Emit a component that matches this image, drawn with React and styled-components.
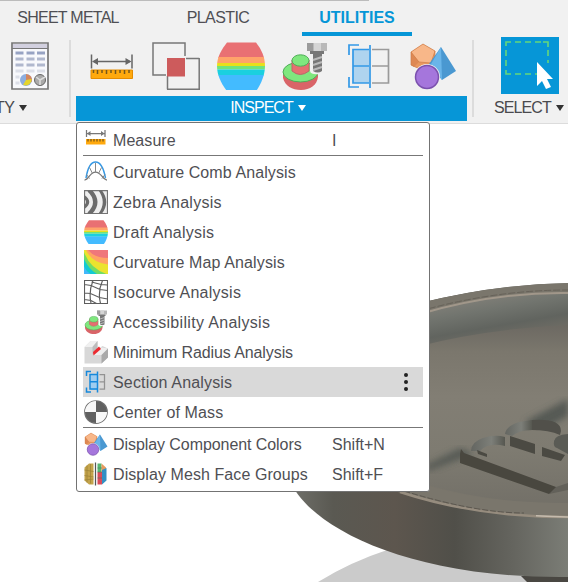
import React from "react";
import styled, { createGlobalStyle, css } from "styled-components";

const GlobalStyle = createGlobalStyle`
  * { box-sizing: border-box; }
  body { margin: 0; background: #fff; overflow: hidden; }
`;

const Page = styled.main`
  position: relative;
  display: flex;
  flex-direction: column;
  width: 568px;
  height: 582px;
  overflow: hidden;
  background: #fff;
  color: #4f4f54;
  font: 16px/1 "Liberation Sans", Arial, sans-serif;
`;

const Ribbon = styled.header`
  display: flex;
  flex-direction: column;
  flex: none;
  height: 124px;
  background: #f1f1f1;
  border-bottom: 1px solid #dcdcdc;
`;

const TopEdge = styled.div`
  width: 369px;
  height: 1px;
  background: #bcbcbc;
`;

const Tabs = styled.nav`
  display: flex;
  height: 35px;
  padding-left: 17px;
`;

const Tab = styled.div`
  display: flex;
  flex: none;
  justify-content: center;
  width: ${(p) => p.$width}px;
  margin-right: ${(p) => p.$gap || 0}px;
  padding-top: 9px;
  white-space: nowrap;
  letter-spacing: ${(p) => p.$spacing}px;
  ${(p) =>
    p.$active &&
    css`
      color: #0696d7;
      font-weight: 700;
      border-bottom: 4px solid #0696d7;
    `}
`;

const Panels = styled.div`
  display: flex;
  height: 87px;
`;

const Panel = styled.section`
  display: flex;
  flex: none;
  flex-direction: column;
  width: ${(p) => p.$width}px;
`;

const PanelIcons = styled.div`
  display: flex;
  flex: none;
  align-items: center;
  gap: 16.3px;
  height: ${(p) => (p.$tile ? 58 : 60)}px;
  margin-bottom: ${(p) => (p.$tile ? 2 : 0)}px;
  padding-left: ${(p) => p.$inset || 0}px;
`;

const PanelTitle = styled.div`
  display: flex;
  align-items: center;
  justify-content: ${(p) => p.$align || "center"};
  gap: 5px;
  height: 25px;
  padding: 0 ${(p) => (p.$active ? 7 : 0)}px 1px 0;
  margin-left: ${(p) => p.$shift || 0}px;
  white-space: nowrap;
  letter-spacing: ${(p) => p.$spacing || 0}px;
  background: ${(p) => (p.$active ? "#0696d7" : "transparent")};
  color: ${(p) => (p.$active ? "#fff" : "#4a4a4e")};
`;

const Caret = styled.span`
  width: 0;
  height: 0;
  border: solid transparent;
  border-width: 6px 4.5px 0;
  border-top-color: ${(p) => (p.$light ? "#fff" : "#333")};
`;

const Divider = styled.div`
  flex: none;
  width: 2px;
  height: 77px;
  margin: 4px ${(p) => p.$after}px 0 ${(p) => p.$before || 0}px;
  background: #dcdcdc;
`;

const SelectTile = styled.div`
  display: grid;
  place-items: center;
  width: 58px;
  height: 57px;
  background: #0696d7;
`;

const Viewport = styled.div`
  flex: 1;
  min-height: 0;
`;

const Menu = styled.div`
  position: absolute;
  left: 76px;
  top: 122px;
  width: 354px;
  height: 370px;
  padding: 2px 6px;
  background: #fff;
  border: 1px solid #737373;
  border-radius: 3px;
`;

const Item = styled.div`
  display: grid;
  grid-template-columns: 29px 219px 65px 1fr;
  align-items: center;
  height: 30px;
  padding-left: 1px;
  background: ${(p) => (p.$selected ? "#d9d9d9" : "transparent")};
`;

const ItemText = styled.span`
  padding-top: 2px;
  white-space: nowrap;
  letter-spacing: ${(p) => p.$spacing || 0}px;
`;

const Rule = styled.hr`
  height: 1px;
  margin: 0 0 1px;
  border: 0;
  background: #777;
`;

const Dots = styled.div`
  display: flex;
  flex-direction: column;
  gap: 3px;
  padding-left: 7px;
  i {
    width: 4px;
    height: 4px;
    border-radius: 2px;
    background: #222;
  }
`;

const Svg = styled.svg`
  display: block;
  flex: none;
`;

const Icon = ({ size = 24, children }) => (
  <Svg width={size} height={size} viewBox="0 0 48 48" fill="none">
    {children}
  </Svg>
);

const Measure = ({ size }) => (
  <Icon size={size}>
    <path d="M3.5 12.5v14M44 12.5v14M6 19.5h36" stroke="#666" strokeWidth="1.5" />
    <path d="m4 19.5 6-3.5v7zM43.500 19.500l-6-3.500v7z" fill="#666" />
    <path d="M3 28h41.500v8.500H3z" fill="#ffa90d" stroke="#e58c00" />
    <path d="M5.500 28v3M9.500 28v4M14 28v3M18.500 28v4M23 28v3M27.500 28v4M32 28v3M36.500 28v4M41 28v3" stroke="#75571c" strokeWidth="1.500" />
  </Icon>
);

const MeasureSmall = () => (
  <Icon>
    <path d="M5 4v14M42 4v14M6 11h35" stroke="#777" strokeWidth="2.500" />
    <path d="m6 11 7-5v10zM41 11l-7-5v10z" fill="#777" />
    <path d="M4 22h39v11H4z" fill="#ffa90d" />
    <path d="M8 22v5M14 22v5M20 22v5M26 22v5M32 22v5M38 22v5" stroke="#73551c" strokeWidth="2.500" />
  </Icon>
);

const Interference = ({ size }) => (
  <Icon size={size}>
    <path d="M33 14V1H1v32h13M34 16.500h13.200M15.500 34v13.200M47.200 16v31.200M15 47.200H48" stroke="#777" strokeWidth="1.500" />
    <path d="M15 16h18v18.500H15z" fill="#cd5b5c" />
  </Icon>
);

const Draft = ({ size }) => (
  <Icon size={size}>
    <clipPath id={`barrel${size || 24}`}>
      <path d="M10 .5h29c5.500 7 9 14.500 9 23.500s-4 18-8.500 24.500h-30C4 41 0 33 0 24S4.500 7.500 10 .5Z" />
    </clipPath>
    <g clipPath={`url(#barrel${size || 24})`}>
      <path d="M0 0h48v16H0z" fill="#e97073" />
      <path d="M0 15h48v6H0z" fill="#ffa36a" />
      <path d="M0 21h48v3H0z" fill="#e9df1b" />
      <path d="M0 24h48v3.500H0z" fill="#72e37b" />
      <path d="M0 27.500h48v6H0z" fill="#1bd0df" />
      <path d="M0 33h48v16H0z" fill="#43bbff" />
    </g>
  </Icon>
);

const Access = ({ size }) => (
  <Icon size={size}>
    <path d="M2 31v5c2 8 9 12 18 12s16-5 17-13v-4z" fill="#d96468" />
    <ellipse cx="19.500" cy="30" rx="17.500" ry="10" fill="#7fe77e" stroke="#4ead57" />
    <path d="M11 18v11q8 7 17 0V18z" fill="#e56f70" stroke="#b9686a" />
    <ellipse cx="19.500" cy="18.500" rx="8.500" ry="5.700" fill="#7fe77e" stroke="#4ead57" />
    <path d="M29 29q1 4 9 3V20h-9z" fill={size ? "#f1f1f1" : "#fff"} />
    <path d="M26 1h20v8H26z" fill="#b9b9b9" />
    <path d="M26 1h6v8h-6z" fill="#9b9b9b" />
    <path d="M33 1h7v8h-7z" fill="#d5d5d5" />
    <path d="M29 9h14v3H29zM32 12h9v17q-4 3-9 0z" fill="#777" />
    <path d="m32 18 9-3m-9 8 9-3m-9 8 9-3" stroke="#bbb" strokeWidth="2" />
  </Icon>
);

const Section = ({ size }) => (
  <Icon size={size}>
    <path d="M8 7h16v34H8z" fill="#afd4ef" />
    <path d="M27 7.500h16.500V41H27M27 24h16.500" stroke="#9a9a9a" strokeWidth="1.700" />
    <path d="M24 7.500H8V41h16M8 24h16M25 3v43M14 3H4v10M4 35v10h10" stroke="#3399e7" strokeWidth="1.700" />
  </Icon>
);

const SectionSmall = () => (
  <Icon>
    <path d="M13 8h13v32H13z" fill="#9fcdf0" />
    <path d="M31 9h10v29H31M31 23.500h10" stroke="#929292" strokeWidth="2.500" />
    <path d="M26 9H12v29h14M12 23.500h14M27 3v42M14 3H5v9M5 35v9h9" stroke="#1689dc" strokeWidth="3" />
  </Icon>
);

const Shapes = ({ size }) => (
  <Icon size={size}>
    <path d="M14 2 26 9v13L15 29 2 23V10z" fill="#e9985f" />
    <path d="m14 2 12 7-4 12-12-1-8-10z" fill="#f8b789" />
    <path d="M2 10 10 20 5 25l-3-2z" fill="#de8853" />
    <path d="M2 10 14 2l12 7v13L15 29 2 23zM2 10l8 10 12 1 4-12" stroke="#cf7c48" strokeWidth=".7" />
    <path d="m32 5 15 24-14 9-13-16z" fill="#4a98d1" />
    <path d="M32 5 22 22l11 16z" fill="#6ab5e9" />
    <circle cx="18" cy="35" r="13" fill={size ? "#f1f1f1" : "#fff"} />
    <circle cx="18" cy="35" r="11.500" fill="#a576dc" stroke="#7b51ae" strokeWidth="1.500" />
  </Icon>
);

const Comb = () => (
  <Icon>
    <path d="M4 36C11-7 35-7 43 36" stroke="#3798e3" strokeWidth="3" />
    <path d="M1 40c9 0 10-16 22-16s14 16 23 16" stroke="#777" strokeWidth="2.500" />
    <path d="M23 6v18M11 15l6 12M35 15l-6 12M5 29l6 8M42 29l-6 8" stroke="#888" strokeWidth="2" />
  </Icon>
);

const Zebra = () => (
  <Icon>
    <path d="M1 1h46v46H1z" fill="#eee" stroke="#747474" strokeWidth="2.500" />
    <path d="M1 10q19 14 0 28v-8q6-6 0-12zM9 1h8q20 23 0 46H9l-2-2q22-21 0-42zM29 1h7q17 23 0 46h-7q17-23 0-46z" fill="#6b6b6b" />
  </Icon>
);

const CurveMap = () => (
  <Icon>
    <path d="M0 0h48v48H0z" fill="#ef777b" />
    <path d="M8 0q13 16 40 16v32H0V0z" fill="#ffa463" />
    <path d="M4 0q12 26 44 29v19H0V0z" fill="#ebe32e" />
    <path d="M0 4q11 32 45 44H0z" fill="#71dc66" />
    <path d="M0 18q10 21 26 30H0z" fill="#12cad3" />
    <path d="M0 33q4 9 13 15H0z" fill="#42b8fb" />
  </Icon>
);

const Isocurve = () => (
  <Icon>
    <path d="M1 1h46v46H1zM18 1Q9 23 14 47M37 1q-10 23-4 46M1 9l13 2 18 8 15 2M1 26l12 1 18 8 16 3M1 39l13 2 11 6M15 4l19 5 13 1" stroke="#5d5d5d" strokeWidth="2.300" />
  </Icon>
);

const Radius = () => (
  <Icon>
    <path d="M1 14 13 2h14v17l10-7 11 5v18L35 47H1z" fill="#d8d8d8" />
    <path d="M1 14 13 2h14L17 14z" fill="#f0f0f0" />
    <path d="M17 14 27 2v18l-10 9z" fill="#bcbcbc" />
    <path d="m18 30 17-15 13 2-13 13z" fill="#eee" />
    <path d="m35 30 13-13v18L35 47z" fill="#aaa" />
    <path d="m18 24 12-11 4 5-15 13z" fill="#ec2a30" />
  </Icon>
);

const Mass = () => (
  <Icon>
    <circle cx="24" cy="24" r="22.500" fill="#f7f7f7" stroke="#757575" strokeWidth="2.500" />
    <path d="M24 24V2A22 22 0 0 0 2 24zM24 24v22a22 22 0 0 0 22-22z" fill="#f7f7f7" />
    <path d="M24 2a22 22 0 0 1 22 22H24v22A22 22 0 0 1 2 24h22z" fill="#606060" />
  </Icon>
);

const Mesh = () => (
  <Icon>
    <path d="m1 11 9-8h9v42h-9l-9-8z" fill="#c3a34b" />
    <path d="M6 7v34M13 4v39M1 16l18 3M1 27l18 3M1 36l18-2" stroke="#9d8438" strokeWidth="1.500" />
    <path d="M27 3h8v17h-8z" fill="#55b673" />
    <path d="m35 3 9 8v9h-9z" fill="#e69a5d" />
    <path d="M27 20h9v25h-9z" fill="#d94c5a" />
    <path d="M36 16l9-4v25l-9 8z" fill="#3290c4" />
    <path d="M27 12h9M27 20h9M27 32h9" stroke="#48785c" strokeWidth="1.200" />
    <path d="M23 1v46" stroke="#555" strokeWidth="2.500" />
  </Icon>
);

const Table = () => (
  <Svg width="38" height="48" viewBox="0 0 38 48">
    <path d="M1 1h36v46H1z" fill="#f8f9fc" stroke="#777" strokeWidth="1.700" />
    <path d="M2 2h34v4H2z" fill="#d2d0df" />
    <path d="M1 6.500h36" stroke="#777" />
    <path d="M4.500 11h8m3 0h8m2.500 0h8" stroke="#97a3c3" strokeWidth="3" />
    <path d="M4.500 17h8m3 0h8m2.500 0h8M4.500 23h8m3 0h8m2.500 0h8" stroke="#b0b8ce" strokeWidth="3" />
    <path d="M4.500 29h8m3 0h8m2.500 0h8M4.500 35h4M4.500 41h4" stroke="#dcdfe8" strokeWidth="3" />
    <circle cx="15" cy="38" r="6" fill="#8daddf" />
    <path d="M15 32a6 6 0 0 1 5.700 8L15 38z" fill="#d4865f" />
    <path d="m15 38 5.700-1q-1 8-8.700 6z" fill="#e5d52c" />
    <circle cx="29" cy="38" r="5.500" fill="#aaa" stroke="#666" />
    <path d="m29 38-4-3m4 3 5-3m-5 3v5" stroke="#ddd" strokeWidth="1.500" />
  </Svg>
);

const SelectIcon = () => (
  <Svg width="58" height="57" viewBox="0 0 58 57">
    <path d="M5 9V5h5M42 5h5v5M5 33v4h5" fill="none" stroke="#65d77b" strokeWidth="1.600" />
    <path d="M14 5h26M5 13v18M47 13v13M14 37h23" fill="none" stroke="#65d77b" strokeWidth="1.600" strokeDasharray="6 4" />
    <path d="M36 25v24l5-5 4 8 5-2-4-8h6z" fill="#fff" />
  </Svg>
);

const Model = () => (
  <Svg width="568" height="458" viewBox="0 124 568 458">
    <defs>
      <linearGradient id="side" gradientUnits="userSpaceOnUse" x1="298" x2="568" y1="0" y2="0">
        <stop stopColor="#6c6c66" />
        <stop offset=".13" stopColor="#5a5952" />
        <stop offset=".36" stopColor="#5d564e" />
        <stop offset=".58" stopColor="#504f49" />
        <stop offset=".8" stopColor="#65655f" />
        <stop offset="1" stopColor="#7b7d76" />
      </linearGradient>
      <linearGradient id="wall" gradientUnits="userSpaceOnUse" x1="480" x2="487" y1="298" y2="338">
        <stop stopColor="#7f7e77" />
        <stop offset=".3" stopColor="#72756f" />
        <stop offset=".75" stopColor="#61645f" />
        <stop offset="1" stopColor="#6b6a63" />
      </linearGradient>
      <linearGradient id="floor" gradientUnits="userSpaceOnUse" x1="495" x2="495" y1="325" y2="505">
        <stop stopColor="#6c6962" />
        <stop offset=".15" stopColor="#7b776d" />
        <stop offset=".4" stopColor="#827e74" />
        <stop offset=".7" stopColor="#7e7b71" />
        <stop offset="1" stopColor="#737068" />
      </linearGradient>
      <linearGradient id="arc" x1="0" x2="1" y1="0" y2="0">
        <stop stopColor="#646661" />
        <stop offset=".6" stopColor="#7d7f79" />
        <stop offset="1" stopColor="#565750" />
      </linearGradient>
      <filter id="soft"><feGaussianBlur stdDeviation="3" /></filter>
      <clipPath id="dish">
        <path d="M290 480C305 522 400 579 568 577V283Q496 284 420 303z" />
      </clipPath>
    </defs>
    <path d="M318 582Q350 562 390 549L530 575V582z" fill="#cbcbcb" />
    <path d="M521 576h47v6h-41z" fill="#494742" />
    <path d="M290 480C305 522 400 579 568 577V283Q496 284 420 303z" fill="url(#side)" />
    <g clipPath="url(#dish)">
      <path d="M390 310Q490 281 568 283V518Q480 515 390 490z" fill="#7a766c" />
      <path d="M420 314Q495 292 568 293v34Q485 331 420 350z" fill="url(#wall)" />
      <path d="M420 314Q495 292 568 293" fill="none" stroke="#a1978a" strokeWidth="2" />
      <path d="M420 311Q495 290 568 290" fill="none" stroke="#676259" strokeDasharray="7 2" />
      <path d="M420 346Q485 329 568 325V504Q485 503 420 483z" fill="url(#floor)" />
      <path d="m425 466 35-18 14 6-46 17z" fill="#4c514e" opacity=".75" filter="url(#soft)" />
      <path d="m524 422 44-23v17l-22 12z" fill="#4c514e" opacity=".8" filter="url(#soft)" />
      <path d="M471 451q0-9 12-13t22-1v9q-17-4-25 5z" fill="url(#arc)" />
      <path d="M505 434q1-8 14-12l13-2v10q-13 0-20 6z" fill="url(#arc)" />
      <path d="M532 420q29-2 29 11l-1 4q-11-5-28-5z" fill="#51504a" />
      <path d="M510 436 535 444v10l-25-8zM542 447l23 8-4 6-19-5zM477 450l10 4v3l-9-3z" fill="#4b4a43" />
      <path d="m461 449 3 4 92 34v3l-7 4-89-31v-9z" fill="#49473f" />
      <path d="M568 434q-13 1-14 7t3 7l11 6z" fill="#5a5b55" />
      <path d="m556 487 12-4v7l-19 4z" fill="#63615a" />
      <path d="M420 483q57 20 148 20v14Q484 515 400 491z" fill="#7a766c" />
      <path d="M400 492q76 25 168 25" fill="none" stroke="#968c7e" strokeWidth="2.500" />
      <path d="M536 515.700q16 1 32 1.300" fill="none" stroke="#c5bbad" strokeWidth="1.500" />
      <path d="M404 491q72 22 120 22" fill="none" stroke="#5c574f" strokeDasharray="6 2" />
    </g>
  </Svg>
);

const groups = [
  [{ icon: <MeasureSmall />, text: "Measure", spacing: 0.07, keys: "I" }],
  [
    { icon: <Comb />, text: "Curvature Comb Analysis", spacing: 0.1 },
    { icon: <Zebra />, text: "Zebra Analysis", spacing: 0.28 },
    { icon: <Draft />, text: "Draft Analysis", spacing: 0.25 },
    { icon: <CurveMap />, text: "Curvature Map Analysis", spacing: 0.13 },
    { icon: <Isocurve />, text: "Isocurve Analysis", spacing: 0.27 },
    { icon: <Access />, text: "Accessibility Analysis", spacing: 0.32 },
    { icon: <Radius />, text: "Minimum Radius Analysis", spacing: -0.1 },
    { icon: <SectionSmall />, text: "Section Analysis", spacing: 0.17, selected: true },
    { icon: <Mass />, text: "Center of Mass", spacing: 0.13 },
  ],
  [
    { icon: <Shapes />, text: "Display Component Colors", spacing: -0.07, keys: "Shift+N" },
    { icon: <Mesh />, text: "Display Mesh Face Groups", spacing: 0.08, keys: "Shift+F" },
  ],
];

export default function App() {
  return (
    <Page>
      <GlobalStyle />
      <Ribbon>
        <TopEdge />
        <Tabs>
          <Tab $width={102} $gap={67} $spacing={-0.75}>SHEET METAL</Tab>
          <Tab $width={64} $gap={52} $spacing={-0.6}>PLASTIC</Tab>
          <Tab $width={110} $active $spacing={0}>UTILITIES</Tab>
        </Tabs>
        <Panels>
          <Panel $width={69}>
            <PanelIcons $inset={11}><Table /></PanelIcons>
            <PanelTitle $align="flex-start" $shift={-5} $spacing={-0.5}>TY <Caret /></PanelTitle>
          </Panel>
          <Divider $after={5} />
          <Panel $width={391}>
            <PanelIcons $inset={12}>
              <Measure size={48} />
              <Interference size={48} />
              <Draft size={48} />
              <Access size={48} />
              <Section size={48} />
              <Shapes size={48} />
            </PanelIcons>
            <PanelTitle $active $spacing={-1}>INSPECT <Caret $light /></PanelTitle>
          </Panel>
          <Divider $before={5} $after={20} />
          <Panel $width={74}>
            <PanelIcons $tile $inset={7}><SelectTile><SelectIcon /></SelectTile></PanelIcons>
            <PanelTitle $align="flex-start" $spacing={-0.9}>SELECT <Caret /></PanelTitle>
          </Panel>
        </Panels>
      </Ribbon>
      <Viewport><Model /></Viewport>
      <Menu>
        {groups.map((items, index) => (
          <React.Fragment key={index}>
            {index > 0 && <Rule />}
            {items.map(({ icon, text, spacing, keys, selected }) => (
              <Item key={text} $selected={selected}>
                {icon}
                <ItemText $spacing={spacing}>{text}</ItemText>
                <ItemText>{keys}</ItemText>
                {selected && <Dots><i /><i /><i /></Dots>}
              </Item>
            ))}
          </React.Fragment>
        ))}
      </Menu>
    </Page>
  );
}
